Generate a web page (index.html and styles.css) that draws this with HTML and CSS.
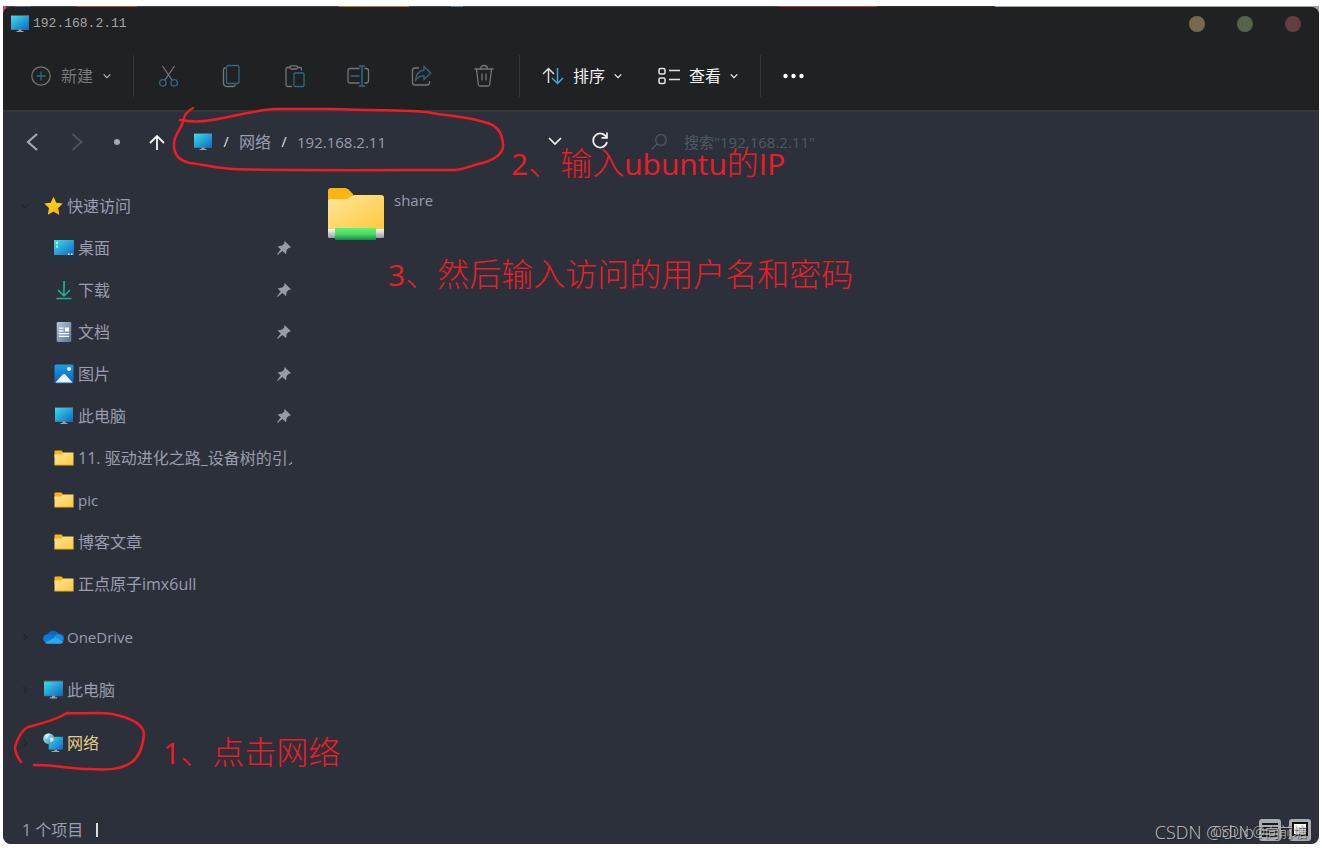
FILE: index.html
```html
<!DOCTYPE html>
<html lang="zh-CN">
<head>
<meta charset="utf-8">
<meta name="viewport" content="width=device-width, initial-scale=1">
<title>192.168.2.11</title>
<link rel="stylesheet" href="styles.css">
</head>
<body>
<svg class="defs" aria-hidden="true">
  <defs>
    <linearGradient id="g-screen" x1="0" y1="0" x2="1" y2="1"><stop offset="0" stop-color="#3fdcea"/><stop offset="1" stop-color="#0b68c4"/></linearGradient>
    <linearGradient id="g-folder" x1="0" y1="0" x2="1" y2="1"><stop offset="0" stop-color="#ffe59c"/><stop offset="1" stop-color="#ffc93a"/></linearGradient>
    <linearGradient id="g-doc" x1="0" y1="0" x2="1" y2="1"><stop offset="0" stop-color="#b4c6dc"/><stop offset="1" stop-color="#56759a"/></linearGradient>
    <linearGradient id="g-pic" x1="0" y1="0" x2="0" y2="1"><stop offset="0" stop-color="#1ba0e6"/><stop offset="1" stop-color="#0b5cb8"/></linearGradient>
    <linearGradient id="g-green" x1="0" y1="0" x2="0" y2="1"><stop offset="0" stop-color="#5cf277"/><stop offset=".5" stop-color="#4bdc69"/><stop offset="1" stop-color="#148a43"/></linearGradient>
    <linearGradient id="g-pipe" x1="0" y1="0" x2="0" y2="1"><stop offset="0" stop-color="#fafafa"/><stop offset="1" stop-color="#9c9ca0"/></linearGradient>
    <linearGradient id="g-down" x1="0" y1="0" x2="1" y2="1"><stop offset="0" stop-color="#38cb8e"/><stop offset="1" stop-color="#12a59a"/></linearGradient>
    <linearGradient id="g-globe" x1="0" y1="0" x2="1" y2="1"><stop offset="0" stop-color="#c4eefa"/><stop offset="1" stop-color="#2788c4"/></linearGradient>
  </defs>
  <symbol id="i-monitor" viewBox="0 0 20 18"><path d="M1 0h18v15H1z" fill="#55606a"/><path d="M1 1h18v13.500H1z" fill="url(#g-screen)"/><path d="M8.500 14.500h3V16h2v1h-7v-1h2z" fill="#9aa4ab"/></symbol>
  <symbol id="i-chev" viewBox="0 0 8 8"><path d="M.7 2.300 4 5.600l3.300-3.300" fill="none" stroke="currentColor" stroke-width="1.200"/></symbol>
  <symbol id="i-pin" viewBox="0 0 16 16"><path d="M8.600 1 15 7.200l-2.300.7-2.100 2.200-.5 4.200-3.700-3.400L1.500 15 1 14.600l3.700-5L1.600 6.400l4.600-.8 2-2.200z" fill="#949ca5"/></symbol>
  <symbol id="i-folder" viewBox="0 0 20 16"><path d="M.5 1.500Q.5.500 1.500.500h6L9.500 3v4h-9z" fill="#fbb414"/><path d="M.5 4.500h7L9.500 2.500h10V15H.5z" fill="url(#g-folder)"/><path d="M.5 15h19" stroke="#eab028"/></symbol>
</svg>

<div class="desktop">
<main class="window">
  <header class="titlebar">
    <svg class="mon"><use href="#i-monitor"/></svg>
    <h1 class="title">192.168.2.11</h1>
    <div class="controls">
      <button class="dot min" aria-label="最小化"></button>
      <button class="dot max" aria-label="最大化"></button>
      <button class="dot close" aria-label="关闭"></button>
    </div>
  </header>

  <div class="toolbar">
    <button class="tool new">
      <svg width="20" height="20" fill="none"><circle cx="10" cy="10" r="9.200" stroke="#74767a" stroke-width="1.200"/><path d="M10 5.500v9M5.500 10h9" stroke="#2f6885" stroke-width="1.300"/></svg>
      <span class="gray">新建</span><svg class="chev"><use href="#i-chev"/></svg>
    </button>
    <i class="sep"></i>
    <div class="icons">
      <button aria-label="剪切"><svg viewBox="0 0 24 24" fill="none" stroke-width="1.300"><path d="M5.500 2 15 16M17.500 2 8 16" stroke="#74767a"/><circle cx="5.800" cy="18.800" r="3.200" stroke="#2f6885"/><circle cx="17.200" cy="18.800" r="3.200" stroke="#2f6885"/></svg></button>
      <button aria-label="复制"><svg viewBox="0 0 24 24" fill="none" stroke-width="1.300"><path d="M5.500 3.500Q3.500 4 3.500 6v12.500q0 4 4 4h5.500q2 0 2.500-2" stroke="#74767a"/><rect x="6.500" y="1.500" width="12.500" height="18" rx="2" stroke="#2f6885"/></svg></button>
      <button aria-label="粘贴"><svg viewBox="0 0 24 24" fill="none" stroke-width="1.300"><path d="M7 3.500H4.500Q3 3.500 3 5v16q0 1.500 1.500 1.500H9M14.500 3.500H17q1.500 0 1.500 1.500v1.500" stroke="#74767a"/><rect x="7" y="1.800" width="7.500" height="3.200" rx="1.500" stroke="#74767a"/><rect x="11" y="9" width="10" height="13.500" rx="1" stroke="#2f6885"/></svg></button>
      <button aria-label="重命名"><svg viewBox="0 0 24 24" fill="none" stroke-width="1.300"><path d="M13.500 4.500H4Q2 4.500 2 6.500v10q0 2.500 2 2.500h9.500M18.500 4.500H20q2.500 0 2.500 2v10q0 2.500-2.500 2.500h-1.500" stroke="#74767a"/><path d="M16 2.500v19M12.800 2h6.400M12.800 22h6.400M4.500 12h9" stroke="#2f6885" stroke-width="1.600"/></svg></button>
      <button aria-label="共享"><svg viewBox="0 0 24 24" fill="none" stroke-width="1.300"><path d="M10 4H6Q3.500 4 3.500 6.500v12Q3.500 21 6 21h12q2.500 0 2.500-2.500V17" stroke="#74767a"/><path d="M15 2.500 21.700 9 15 15.500V12q-5-.4-8.300 4Q7 7.500 15 6z" stroke="#2f6885"/></svg></button>
      <button aria-label="删除"><svg viewBox="0 0 24 24" fill="none" stroke="#74767a" stroke-width="1.300"><path d="M2.500 5h19M8.500 5q0-3.500 3.500-3.500T15.500 5M4.500 5l1.800 15.500q.2 1.500 1.700 1.500h8q1.500 0 1.700-1.500L19.500 5M10 9.500v7M14 9.500v7"/></svg></button>
    </div>
    <i class="sep"></i>
    <button class="tool sort">
      <svg width="22" height="20" fill="none" stroke-width="1.500"><path d="M6.500 17V2.500M1 8l5.500-5.500L12 8" stroke="#dcdcdc"/><path d="M15.500 2v15M10 12l5.500 5.500L21 12" stroke="#3fa6db"/></svg>
      <span>排序</span><svg class="chev"><use href="#i-chev"/></svg>
    </button>
    <button class="tool">
      <svg width="22" height="20" fill="none" stroke="#e4e4e4" stroke-width="1.500"><rect x="1" y="2.500" width="6" height="5.500" rx="1.500"/><rect x="1" y="12" width="6" height="5.500" rx="1.500"/><path d="M11 4.500h11M11 13.500h11"/></svg>
      <span>查看</span><svg class="chev"><use href="#i-chev"/></svg>
    </button>
    <i class="sep"></i>
    <button class="tool" aria-label="更多"><svg width="22" height="20" fill="#fff"><circle cx="2.500" cy="10" r="2.200"/><circle cx="10.500" cy="10" r="2.200"/><circle cx="18.500" cy="10" r="2.200"/></svg></button>
  </div>

  <div class="navbar">
    <div class="history">
      <button aria-label="后退"><svg width="24" height="24" fill="none" stroke="#a3a7b0" stroke-width="2.200"><path d="M17 4 8 12l9 8"/></svg></button>
      <button aria-label="前进"><svg width="24" height="24" fill="none" stroke="#4c505a" stroke-width="2"><path d="m7.500 4 9 8-9 8"/></svg></button>
      <button aria-label="最近位置"><svg width="14" height="24" fill="#a3a7b0"><circle cx="7" cy="12" r="3"/></svg></button>
      <button aria-label="向上"><svg width="24" height="24" fill="none" stroke="#f4f4f4" stroke-width="1.800"><path d="M12 20V6M5 13l7-7 7 7"/></svg></button>
    </div>
    <nav class="crumbs" aria-label="地址">
      <svg class="mon"><use href="#i-monitor"/></svg>
      <span class="slash">/</span><a href="#">网络</a><span class="slash">/</span><a class="latin" href="#">192.168.2.11</a>
    </nav>
    <div class="go">
      <button aria-label="展开"><svg width="16" height="20" fill="none" stroke="#f0f0f0" stroke-width="1.700"><path d="m2 6 6 6 6-6"/></svg></button>
      <button aria-label="刷新"><svg width="18" height="20" fill="none" stroke="#f0f0f0" stroke-width="1.700"><path d="M15.500 5.500A7 7 0 1 0 16 10M16 .5v5.300h-5.500"/></svg></button>
    </div>
    <label class="search">
      <svg width="18" height="20" fill="none" stroke="#4c5964" stroke-width="1.300"><circle cx="11" cy="8" r="5.300"/><path d="M7.200 12 1.500 17.500"/></svg>
      <input type="text" aria-label="搜索" placeholder="搜索&quot;192.168.2.11&quot;">
    </label>
  </div>

  <div class="body">
    <nav class="side" aria-label="导航窗格">
      <section>
        <a class="row top" href="#"><svg class="twist"><use href="#i-chev"/></svg><svg class="ico" viewBox="0 0 20 20"><path d="m10 .8 2.800 6 6.400.8-4.700 4.500 1.200 6.600L10 15.500l-5.700 3.200 1.200-6.600L.8 7.600l6.400-.8z" fill="#ffc815"/><path d="m10 15.500 5.700 3.200-1.200-6.600 4.700-4.500z" fill="#ffb40a"/></svg><span>快速访问</span></a>
        <a class="row" href="#"><svg class="ico" viewBox="0 0 20 18"><path d="M0 1h20v15H0z" fill="url(#g-screen)"/><path d="M2 3h2v2H2zM2 6.500h2v2H2zM14 14.500h1.500V16H14zM17 14.500h1.500V16H17z" fill="#d8fbff"/></svg><span>桌面</span><svg class="pin"><use href="#i-pin"/></svg></a>
        <a class="row" href="#"><svg class="ico" viewBox="0 0 20 20" fill="none" stroke="url(#g-down)" stroke-width="1.500"><path d="M10.100 1 9.900 15.500M4 10l6 6 6-6M2.500 18.500l15 .1"/></svg><span>下载</span><svg class="pin"><use href="#i-pin"/></svg></a>
        <a class="row" href="#"><svg class="ico" viewBox="0 0 20 22"><rect x="2" width="16" height="22" rx="1.500" fill="url(#g-doc)"/><path d="M4.500 6h5v1.500h-5zM4.500 9h5v1.500h-5zM11 6h4.500v4.500H11zM4.500 12h11v1.500h-11zM4.500 15h11v1.500h-11z" fill="#fff"/></svg><span>文档</span><svg class="pin"><use href="#i-pin"/></svg></a>
        <a class="row" href="#"><svg class="ico" viewBox="0 0 20 20"><rect x=".5" y=".5" width="19" height="19" rx="1.500" fill="url(#g-pic)"/><path d="m1.500 18.500 7-7.800q1.500-1.300 3 0l7 7.800z" fill="#f0f8ff"/><circle cx="15" cy="5" r="1.900" fill="#fff"/></svg><span>图片</span><svg class="pin"><use href="#i-pin"/></svg></a>
        <a class="row" href="#"><svg class="ico"><use href="#i-monitor"/></svg><span>此电脑</span><svg class="pin"><use href="#i-pin"/></svg></a>
        <a class="row" href="#"><svg class="ico"><use href="#i-folder"/></svg><span class="clip">11. 驱动进化之路_设备树的引入</span></a>
        <a class="row latin" href="#"><svg class="ico"><use href="#i-folder"/></svg><span>pic</span></a>
        <a class="row" href="#"><svg class="ico"><use href="#i-folder"/></svg><span>博客文章</span></a>
        <a class="row" href="#"><svg class="ico"><use href="#i-folder"/></svg><span>正点原子imx6ull</span></a>
      </section>
      <section><a class="row top latin" href="#"><svg class="twist shut"><use href="#i-chev"/></svg><svg class="ico" viewBox="0 0 22 15"><path d="M5 14a4.600 4.600 0 0 1-.5-9.100A7 7 0 0 1 16.500 4 5 5 0 0 1 18 14z" fill="#0a68bd"/><path d="M4.500 4.900q2-.5 4.500.8l6.500 4L3 13.600a4.500 4.500 0 0 1 1.500-8.700z" fill="#0f7ad6"/><path d="M11 7.500Q13 3.800 17 5q4.500 1 4.300 5l-6 1z" fill="#1490df"/><path d="m2 13.200 11-5.500 8.300 4.500Q20 14.500 18 14.500H5q-2 0-3-1.300z" fill="#2ba8ee"/></svg><span>OneDrive</span></a></section>
      <section><a class="row top" href="#"><svg class="twist shut"><use href="#i-chev"/></svg><svg class="ico"><use href="#i-monitor"/></svg><span>此电脑</span></a></section>
      <section><a class="row top current" href="#" aria-current="page"><svg class="twist shut"><use href="#i-chev"/></svg><svg class="ico" viewBox="0 0 22 21"><path d="M6 4h15v13.500H6z" fill="url(#g-screen)"/><path d="M12 17.500h3V19h2v1H9v-1h3z" fill="#9aa4ab"/><circle cx="6" cy="6" r="5.800" fill="url(#g-globe)"/><path d="M2 2.500q3-2.500 5-1.500L6 3.500l-3 3zM7 5l4 0v3L8 10z" fill="#d6eaf2"/></svg><span>网络</span></a></section>
    </nav>
    <section class="files">
      <a class="file" href="#">
        <svg width="56" height="52"><path d="M0 3q0-3 3-3h14q2 0 3.500 1.500L25 6v9H0z" fill="#fbb414"/><path d="M0 13q0-2 2-2h15q3 0 4.500-1.500T26 7h27q3 0 3 3v33H0z" fill="url(#g-folder)"/><path d="M0 41h56v8q0 1-1 1H1q-1 0-1-1z" fill="url(#g-pipe)"/><rect x="7" y="40" width="41" height="12" rx="1" fill="url(#g-green)"/></svg>
        <span>share</span>
      </a>
    </section>
  </div>

  <footer class="status">
    <span>1 个项目</span><i class="caret"></i>
    <div class="views">
      <button aria-label="详细信息"><svg width="22" height="22" fill="none" stroke="#181a1d" stroke-width="2"><path d="M3 5h16M3 9h16M3 13h16M3 17h16"/></svg></button>
      <button aria-label="大图标"><svg width="22" height="22"><rect x="4" y="4" width="14" height="12" fill="#fff" stroke="#111" stroke-width="2"/></svg></button>
    </div>
  </footer>

  <p class="mark large">CSDN @duo</p>
  <p class="mark small">CSDN @向前塘</p>
  <svg class="ink" viewBox="0 0 520 780" width="520" height="780" aria-hidden="true">
    <path d="M193 108Q185 112 183 121C182 129 173 135 174 145C174 156 180 161 190 163C207 165 215 168 232 169C280 171 400 170 455 170C466 169 470 166 478 164C491 161 504 156 503 144C502 132 497 125 484 122C466 116 448 116 432 113C422 110 400 111 330 109H274C250 111 232 117 212 120Q196 123 180 120"/>
    <path d="M21 762Q15 754 15 747C17 739 22 730 28 727C40 724 54 721 67 713C80 714 99 712 112 714C127 717 144 723 144 735C143 744 140 756 132 762C121 770 106 770 88 769C68 769 61 765 34 765"/>
  </svg>
  <p class="note n1"><span>1</span>、点击网络</p>
  <p class="note n2"><span>2</span>、输入<span>ubuntu</span>的<span>IP</span></p>
  <p class="note n3"><span>3</span>、然后输入访问的用户名和密码</p>
</main>
</div>
</body>
</html>
```
FILE: styles.css
```css
* { box-sizing: border-box; }
body {
  margin: 0;
  padding: 6px 3px 7px;
  background: #fff;
  color: #9a9caf;
  font: 400 16px/24px "Open Sans", "Noto Sans CJK SC", sans-serif;
}
h1, p { margin: 0; font-weight: inherit; }
button { padding: 0; border: 0; background: none; color: inherit; font: inherit; display: flex; align-items: center; }
a { color: inherit; text-decoration: none; }
svg { display: block; flex: none; }
.defs { position: absolute; width: 0; height: 0; }
.desktop {
  padding-top: 1px;
  background: linear-gradient(90deg, #d04a50 0 3px, #454749 3px 12px, #3f68a8 12px 28px, #454749 28px 74px, #a0583a 74px 134px, #454749 134px 336px, #b07a30 336px 406px, #454749 406px 448px, #3e8e98 448px 460px, #454749 460px 777px, #a8403e 777px 874px, #3b3035 874px 992px, #9ea3a5 992px);
  border-radius: 0 0 8px 8px;
}
.window {
  position: relative;
  display: flex;
  flex-direction: column;
  min-height: calc(100vh - 14px);
  background: #2c303b;
  border-radius: 8px;
  overflow: hidden;
}
.titlebar { display: flex; align-items: center; gap: 3px; height: 34px; padding: 0 18px 0 7px; background: #202122; }
.mon { width: 20px; height: 18px; }
.title { font: 13px/20px "Liberation Mono", monospace; color: #a4a4a4; }
.controls { display: flex; gap: 32px; margin-left: auto; }
.dot { width: 16px; height: 16px; border-radius: 50%; }
.min { background: #78684c; }
.max { background: #55634c; }
.close { background: #653c41; }
.toolbar { display: flex; align-items: center; height: 71px; padding: 0 28px; color: #f4f4f4; background: #202122; border-bottom: 2px solid #353637; }
.tool { gap: 9px; }
.tool + .tool { margin-left: 36px; }
.tool .gray { color: #77797c; }
.new { color: #b8b8b8; gap: 10px; }
.chev { width: 8px; height: 8px; }
.sep { width: 1px; height: 42px; margin: 0 22px; background: #353637; flex: none; }
.icons { display: flex; gap: 39px; margin: 0 1px; }
.icons svg { width: 24px; height: 24px; }
.navbar { display: flex; align-items: center; height: 60px; padding: 0 17px; }
.history { display: flex; gap: 21px; }
.crumbs { display: flex; align-items: center; gap: 10px; flex: 0 1 354px; margin-left: 24px; }
.slash { color: #e0e0e0; width: 6px; text-align: center; font-size: 14px; }
.latin { font-size: 15px; }
.go { display: flex; gap: 28px; }
.search { display: flex; align-items: center; flex: 1; gap: 16px; margin-left: 41px; }
.search input { flex: 1; min-width: 0; padding: 0; border: 0; outline: 0; background: none; color: #9a9caf; font: inherit; font-size: 15px; }
.search input::placeholder { color: #4c5964; opacity: 1; }
.body { display: flex; flex: 1; }
.side { flex: 0 0 297px; min-width: 0; width: 297px; padding-top: 13px; }
.side section + section { margin-top: 11px; }
.row { display: flex; align-items: center; gap: 4px; height: 42px; padding: 0 8px 0 51px; }
.row.top { padding-left: 18px; gap: 3px; }
.twist { width: 8px; height: 8px; margin-right: 11px; color: #22252d; }
.shut { transform: rotate(-90deg); }
.ico { width: 20px; height: 20px; }
.row.top .ico { width: 21px; }
.clip { flex: 1; min-width: 0; overflow: hidden; white-space: nowrap; }
.pin { width: 16px; height: 16px; margin-left: auto; }
.current { color: #e6cc84; }
.files { flex: 1; padding: 16px 28px; }
.file { display: flex; gap: 10px; width: 200px; font-size: 15px; }
.status { display: flex; align-items: center; height: 29px; padding: 0 8px 0 19px; }
.caret { width: 2px; height: 14px; margin-left: 13px; background: #ddd; }
.views { display: flex; gap: 8px; margin-left: auto; }
.views button { background: #a9abad; border-radius: 3px; }
.mark { position: absolute; bottom: 0; color: #c4c6ca; font-weight: 300; white-space: nowrap; text-shadow: 1px 1px 1px #222; }
.large { right: 65px; font-size: 18px; }
.small { right: 12px; font-size: 14px; }
.ink { position: absolute; left: -3px; top: -7px; fill: none; stroke: #ee1c25; stroke-width: 2.500; stroke-linecap: round; pointer-events: none; }
.note { position: absolute; color: #ee1c25; font-size: 32px; font-weight: 300; line-height: 40px; white-space: nowrap; pointer-events: none; }
.note span { font-size: 30px; font-weight: 400; }
.n1 { left: 160px; top: 725px; }
.n2 { left: 508px; top: 136px; }
.n3 { left: 385px; top: 247px; }
```
